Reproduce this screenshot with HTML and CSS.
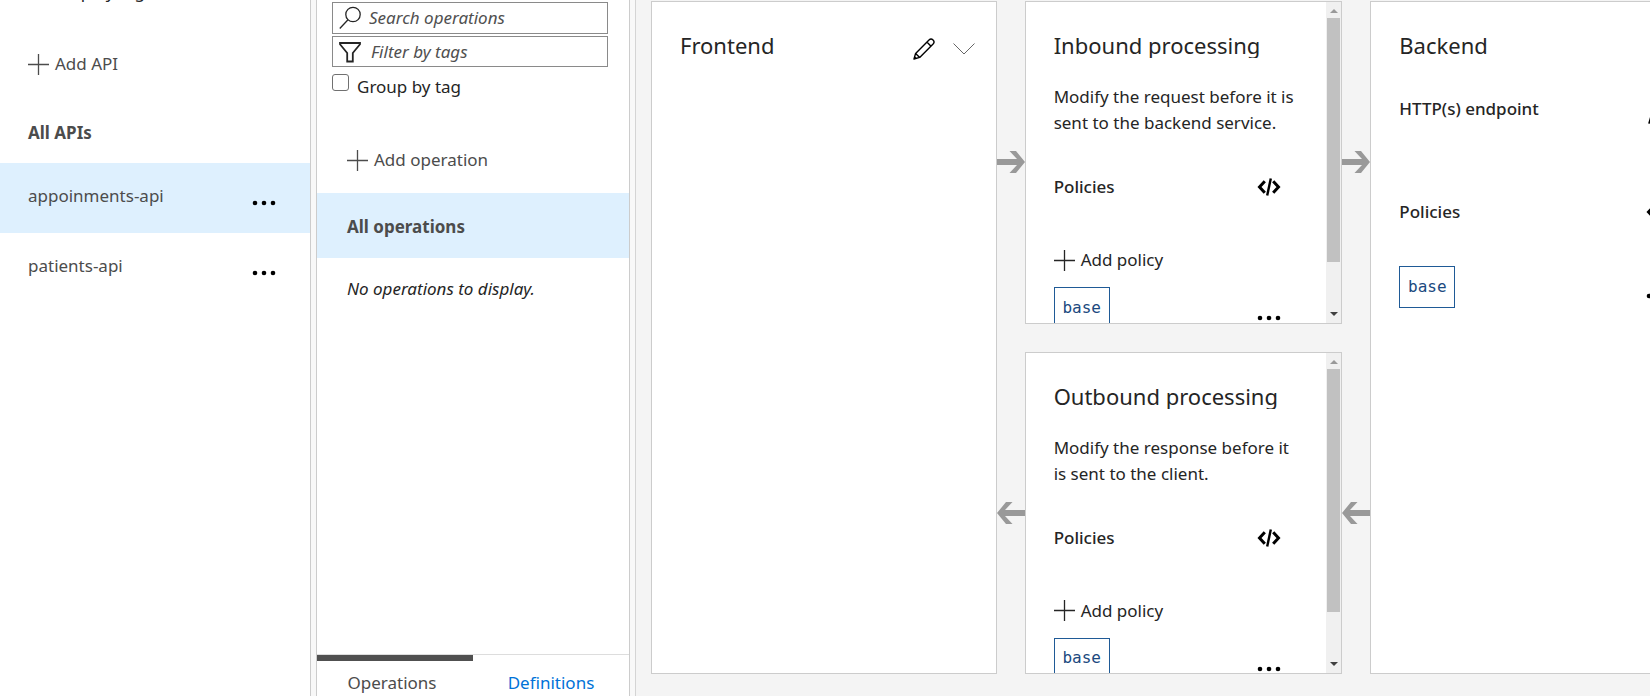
FILE: index.html
```
<!DOCTYPE html>
<html lang="en">
<head>
<meta charset="utf-8">
<title>API design</title>
<link rel="stylesheet" href="styles.css">
</head>
<body>
<svg class="defs" aria-hidden="true">
  <symbol id="plus" viewBox="0 0 21 21"><path d="M10.5 0v21M0 10.5h21" fill="none" stroke="currentColor" stroke-width="1.3"/></symbol>
  <symbol id="dots" viewBox="0 0 24 6"><circle cx="3" cy="3" r="2.3"/><circle cx="12" cy="3" r="2.3"/><circle cx="21" cy="3" r="2.3"/></symbol>
  <symbol id="code" viewBox="0 0 24 18"><path d="M7.800 3.200 2.500 9l5.300 5.800M16.200 3.200 21.500 9l-5.300 5.800" fill="none" stroke="currentColor" stroke-width="3"/><path d="M13.800 .5 10.200 17.500" fill="none" stroke="currentColor" stroke-width="2.400"/></symbol>
  <symbol id="pencil" viewBox="0 0 22 22"><path d="M1 21l1.600-5.600L16 2a2.900 2.900 0 0 1 4.100 4.100L6.700 19.400zM2.600 15.400l4.100 4M13.900 4.100l4.100 4.100" fill="none" stroke="currentColor" stroke-width="1.400" stroke-linejoin="round"/><path d="M1 21l.8-2.800 2 2z"/></symbol>
  <symbol id="right" viewBox="0 0 28 22"><path d="M0 8h20L12.500 0h6.500l9 11-9 11h-6.500L20 14H0z"/></symbol>
  <symbol id="left" viewBox="0 0 28 22"><path d="M28 8H8l7.500-8H9L0 11l9 11h6.500L8 14h20z"/></symbol>
</svg>
<div class="app">
  <nav class="apis">
    <label class="check check-left"><input type="checkbox">Group by tag</label>
    <button class="add add-api"><svg class="plus"><use href="#plus"/></svg>Add API</button>
    <a class="all-apis" href="#">All APIs</a>
    <div class="api selected"><a href="#">appoinments-api</a><button aria-label="More for appoinments-api"><svg class="dots"><use href="#dots"/></svg></button></div>
    <div class="api"><a href="#">patients-api</a><button aria-label="More for patients-api"><svg class="dots"><use href="#dots"/></svg></button></div>
  </nav>
  <section class="operations">
    <div class="filters">
      <div class="field search"><svg class="glyph" viewBox="0 0 22 24"><circle cx="14" cy="8.500" r="7.200"/><path d="M9 13.800.8 22.500"/></svg><input type="text" placeholder="Search operations" aria-label="Search operations"></div>
      <div class="field tags"><svg class="glyph bold" viewBox="0 0 22 24"><path d="M1 3h20v1.200L13.800 13v8.500H8.200V13L1 4.200z"/></svg><input type="text" placeholder="Filter by tags" aria-label="Filter by tags"></div>
      <label class="check"><input type="checkbox">Group by tag</label>
    </div>
    <button class="add add-operation"><svg class="plus"><use href="#plus"/></svg>Add operation</button>
    <a class="all-operations" href="#"><span>All operations</span></a>
    <p class="empty">No operations to display.</p>
    <div class="tabs"><button class="tab current">Operations</button><button class="tab">Definitions</button></div>
  </section>
  <main class="canvas">
    <section class="card frontend">
      <div class="head"><h2>Frontend</h2><button aria-label="Edit"><svg class="pencil"><use href="#pencil"/></svg></button><button aria-label="Expand"><svg class="chevron" viewBox="0 0 22 12"><path d="M.5.5 11 11 21.500.5"/></svg></button></div>
    </section>
    <svg class="arrow a1"><use href="#right"/></svg>
    <svg class="arrow a2"><use href="#left"/></svg>
    <section class="card process">
      <div class="body">
        <h2>Inbound processing</h2>
        <p class="about">Modify the request before it is sent to the backend service.</p>
        <div class="policies"><h3>Policies</h3><button aria-label="Code editor"><svg class="code"><use href="#code"/></svg></button></div>
        <button class="add add-policy"><svg class="plus"><use href="#plus"/></svg>Add policy</button>
        <div class="policy"><button class="base">base</button><button aria-label="More"><svg class="dots"><use href="#dots"/></svg></button></div>
      </div>
      <div class="scroll"><i class="up"></i><i class="thumb"></i><i class="down"></i></div>
    </section>
    <section class="card process outbound">
      <div class="body">
        <h2>Outbound processing</h2>
        <p class="about">Modify the response before it is sent to the client.</p>
        <div class="policies"><h3>Policies</h3><button aria-label="Code editor"><svg class="code"><use href="#code"/></svg></button></div>
        <button class="add add-policy"><svg class="plus"><use href="#plus"/></svg>Add policy</button>
        <div class="policy"><button class="base">base</button><button aria-label="More"><svg class="dots"><use href="#dots"/></svg></button></div>
      </div>
      <div class="scroll"><i class="up"></i><i class="thumb"></i><i class="down"></i></div>
    </section>
    <svg class="arrow a3"><use href="#right"/></svg>
    <svg class="arrow a4"><use href="#left"/></svg>
    <section class="card backend">
      <h2>Backend</h2>
      <div class="endpoint"><h3>HTTP(s) endpoint</h3><button aria-label="Edit"><svg class="pencil"><use href="#pencil"/></svg></button></div>
      <div class="policies"><h3>Policies</h3><button aria-label="Code editor"><svg class="code"><use href="#code"/></svg></button></div>
      <div class="policy"><button class="base">base</button><button aria-label="More"><svg class="dots"><use href="#dots"/></svg></button></div>
    </section>
  </main>
</div>
</body>
</html>
```
FILE: styles.css
```
* { box-sizing: border-box; }
body {
  margin: 0;
  overflow: hidden;
  background: #fff;
  color: #252525;
  font: 17px/26px "Noto Sans", "Open Sans", sans-serif;
}
h2, h3, p { margin: 0; }
button, input { font: inherit; color: inherit; }
button { padding: 0; border: 0; background: none; display: block; cursor: pointer; }
a { color: inherit; text-decoration: none; }
svg { display: block; fill: currentColor; }
.defs { display: none; }
.plus { width: 21px; height: 21px; }
.dots { width: 24px; height: 6px; color: #000; }
.code { width: 24px; height: 18px; color: #000; }
.pencil { width: 22px; height: 22px; color: #000; }
.add { display: flex; align-items: center; gap: 6px; }

.app {
  display: grid;
  grid-template-columns: 311px 314px 1fr;
  column-gap: 5px;
  height: 100vh;
  background: #f8f8f8;
}

.apis { background: #fff; color: #4c4c4c; border-right: 1px solid #ccc; overflow: hidden; }
.check { display: flex; gap: 8px; color: #252525; }
.check input {
  appearance: none;
  width: 17px;
  height: 17px;
  margin: 0;
  border: 1px solid #707070;
  border-radius: 3px;
  background: #fff;
}
.check-left { margin-top: -21px; padding-left: 16px; }
.add-api { margin: 46px 0 0 28px; }
.all-apis { display: block; margin: 43px 0 17px 28px; font-weight: 700; }
.api {
  display: flex;
  justify-content: space-between;
  height: 70px;
  padding: 20px 34px 0 28px;
}
.api button { padding-top: 17px; height: 23px; }
.selected, .all-operations { background: #def0fe; }

.operations {
  display: flex;
  flex-direction: column;
  background: #fff;
  border: 1px solid #ccc;
  border-width: 0 1px;
}
.filters { padding: 2px 21px 0 15px; }
.field {
  display: flex;
  align-items: center;
  gap: 8px;
  padding: 0 6px;
  border: 1px solid #8a8a8a;
}
.search { height: 32px; }
.tags { height: 31px; margin-top: 2px; gap: 10px; }
.glyph { flex: none; width: 22px; height: 24px; fill: none; stroke: #252525; stroke-width: 1.3; }
.bold { stroke-width: 1.8; }
.field input {
  flex: 1;
  min-width: 0;
  height: 26px;
  padding: 0;
  border: 0;
  outline: 0;
  background: none;
  font-style: italic;
}
.field input::placeholder { color: #505050; }
.filters .check { margin-top: 7px; }
.add-operation { margin: 47px 0 20px 30px; color: #4c4c4c; }
.all-operations { height: 65px; padding: 21px 30px 0; color: #4c4c4c; font-weight: 700; }
.empty { padding: 18px 30px; font-style: italic; }
.tabs { display: grid; grid-template-columns: 1fr 1fr; margin-top: auto; border-top: 1px solid #ddd; }
.tab { height: 41px; padding-top: 9px; border-top: 6px solid transparent; color: #0072d8; }
.current { padding-right: 6px; color: #4c4c4c; border-color: #505050; }

.canvas {
  display: grid;
  grid-template-columns: 34.6% 28px 31.8% 28px 34.6%;
  grid-template-rows: 1fr 28px 1fr;
  padding: 1px 0 22px 15px;
  background: #f4f4f4;
  border-left: 1px solid #d4d4d4;
  overflow: hidden;
}
.card { background: #fff; border: 1px solid #ccc; min-height: 0; overflow: hidden; }
.card h2 { height: 28px; overflow: hidden; font-size: 22px; line-height: 30px; font-weight: 400; }
.card h3 { font-size: 17px; font-weight: 500; }
.frontend { grid-area: 1 / 1 / 4 / 2; padding: 28px 21px 0 28px; }
.head { display: flex; align-items: flex-start; gap: 18px; }
.head h2 { flex: 1; }
.head button { padding-top: 8px; }
.head button + button { padding-top: 13px; }
.chevron { width: 22px; height: 12px; fill: none; stroke: #666; }
.arrow { width: 28px; height: 22px; align-self: center; color: #999; }
.a1 { grid-area: 1 / 2; }
.a2 { grid-area: 3 / 2; }
.a3 { grid-area: 1 / 4; }
.a4 { grid-area: 3 / 4; }
.process { grid-area: 1 / 3; display: flex; }
.outbound { grid-area: 3 / 3; }
.body { flex: 1; padding: 28px 28px 0; }
.about { padding-top: 26px; }
.policies, .policy, .endpoint { display: flex; justify-content: space-between; align-items: center; }
.body .policies, .body .policy { padding-right: 17px; }
.body .policies { margin-top: 38px; }
.add-policy { margin-top: 47px; }
.body .policy { margin-top: 14px; align-items: flex-start; }
.body .policy .dots { margin-top: 28px; }
.base {
  width: 56px;
  height: 42px;
  padding-bottom: 2px;
  border: 1px solid #1f5a96;
  color: #1c4a80;
  font: 16px "DejaVu Sans Mono", monospace;
}
.scroll {
  display: flex;
  flex-direction: column;
  align-items: center;
  width: 15px;
  background: #f0f0f0;
}
.up, .down { border: 4px solid transparent; border-top-width: 0; border-bottom: 4px solid #999; }
.up { margin: 7px 0 5px; }
.down { margin: auto 0 7px; border-width: 4px 4px 0; border-top-color: #404040; }
.thumb { width: 13px; height: 76%; background: #c1c1c1; }
.backend { grid-area: 1 / 5 / 4 / 6; padding: 28px 45px 0 28px; }
.endpoint { margin-top: 36px; }
.endpoint button { padding-top: 8px; }
.backend .policies { margin-top: 75px; }
.backend .policy { margin-top: 41px; }
.backend .policy .dots { margin-top: 18px; }
```
